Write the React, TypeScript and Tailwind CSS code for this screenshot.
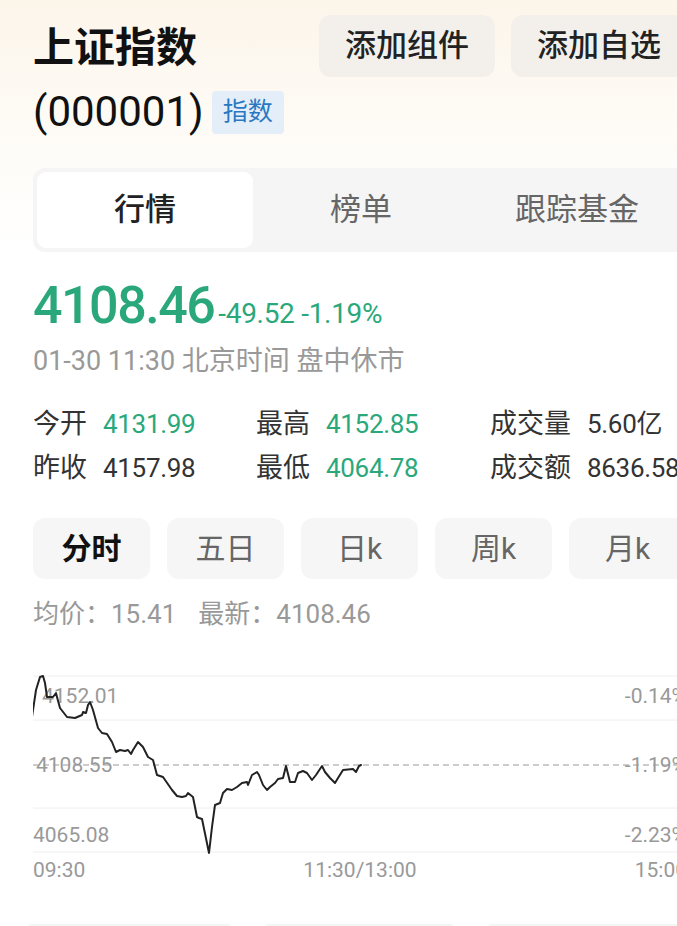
import React from "react";

const pts: [number, number][] = [
  [32, 717], [36, 690], [40, 677], [43, 676], [45, 683], [47, 697], [50, 697], [53, 697], [56, 693], [57, 697],
  [60, 708], [67, 717], [75, 718], [82, 715], [83, 712], [86, 713], [88, 705], [90, 702], [93, 710], [98, 728],
  [102, 733], [107, 734], [112, 742], [116, 752], [120, 750], [125, 751], [128, 750], [131, 754], [133, 750],
  [138, 742], [143, 747], [148, 757], [153, 760], [157, 775], [163, 777], [172, 790], [177, 796], [182, 797],
  [186, 796], [188, 793], [193, 797], [197, 817], [199, 818], [202, 819], [209, 853], [212, 827], [215, 805],
  [220, 803], [223, 793], [227, 789], [232, 790], [237, 787], [242, 783], [247, 782], [248, 785], [252, 775],
  [257, 772], [259, 775], [263, 785], [267, 790], [270, 787], [275, 783], [278, 779], [283, 778], [286, 766],
  [290, 782], [295, 782], [298, 773], [303, 771], [307, 773], [312, 780], [316, 775], [322, 766], [325, 772],
  [330, 778], [335, 783], [338, 778], [343, 770], [353, 769], [356, 772], [359, 766], [361, 765],
];

const linePath = pts.map((p, i) => `${i === 0 ? "M" : "L"}${p[0]} ${p[1]}`).join(" ");

function Stat({ label, value, green, w }: { label: string; value: string; green?: boolean; w: string }) {
  return (
    <div className={`flex items-center shrink-0 ${w}`}>
      <span className="text-[27px] text-[#333]">{label}</span>
      <span className={`ml-4 text-[26px] tracking-[-0.3px] ${green ? "text-[#2aa87b]" : "text-[#333]"}`}>{value}</span>
    </div>
  );
}

export default function App() {
  return (
    <div className="w-[677px] h-[926px] overflow-hidden bg-white font-['Roboto','Noto_Sans_CJK_SC',sans-serif]">
      {/* Header */}
      <div className="bg-gradient-to-b from-[#fcf5ea] via-[#fefbf6] to-white">
        <div className="flex pt-[15px] pl-[33px]">
          <div className="w-[286px] shrink-0 mt-[8px]">
            <div className="text-[41px] leading-[50px] font-bold text-[#111] whitespace-nowrap">上证指数</div>
            <div className="flex items-center mt-[14px] h-[50px]">
              <span className="text-[42px] leading-[50px] text-[#111]">(000001)</span>
              <span className="ml-[8px] h-[43px] px-[11px] flex items-center rounded-[4px] bg-[#e4eef9] text-[#2a78c2] text-[25px]">
                指数
              </span>
            </div>
          </div>
          <div className="flex gap-4 shrink-0">
            <div className="w-[176px] h-[62px] rounded-[12px] bg-[#f3f0ec] flex items-center justify-center text-[31px] font-medium text-[#222]">
              添加组件
            </div>
            <div className="w-[176px] h-[62px] rounded-[12px] bg-[#f3f0ec] flex items-center justify-center text-[31px] font-medium text-[#222]">
              添加自选
            </div>
          </div>
        </div>

        {/* Tabs */}
        <div className="ml-[33px] mt-[31px] w-[656px] h-[84px] p-[4px] rounded-[12px] bg-[#f5f5f5] flex">
          <div className="w-[216px] h-full rounded-[9px] bg-white flex items-center justify-center text-[31px] font-medium text-[#222]">
            行情
          </div>
          <div className="w-[216px] h-full flex items-center justify-center text-[31px] text-[#666]">榜单</div>
          <div className="w-[216px] h-full flex items-center justify-center text-[31px] text-[#666]">跟踪基金</div>
        </div>
      </div>

      {/* Price */}
      <div className="ml-[33px] mt-[24px] flex items-baseline text-[#2aa87b] h-[60px]">
        <span className="text-[52px] leading-[60px] font-medium tracking-[-1.5px]">4108.46</span>
        <span className="ml-[4px] text-[28px] tracking-[-0.3px]">-49.52 -1.19%</span>
      </div>
      <div className="ml-[33px] mt-[7px] text-[27px] leading-[36px] text-[#999] whitespace-nowrap">01-30 11:30 北京时间 盘中休市</div>

      {/* Stats */}
      <div className="ml-[33px] mt-[23px] whitespace-nowrap">
        <div className="flex h-[44px]">
          <Stat label="今开" value="4131.99" green w="w-[223px]" />
          <Stat label="最高" value="4152.85" green w="w-[234px]" />
          <Stat label="成交量" value="5.60亿" w="w-[220px]" />
        </div>
        <div className="flex h-[44px]">
          <Stat label="昨收" value="4157.98" w="w-[223px]" />
          <Stat label="最低" value="4064.78" green w="w-[234px]" />
          <Stat label="成交额" value="8636.58亿" w="w-[220px]" />
        </div>
      </div>

      {/* Periods */}
      <div className="ml-[33px] mt-[28px] flex gap-[17px]">
        {["分时", "五日", "日k", "周k", "月k"].map((t, i) => (
          <div
            key={t}
            className={`w-[117px] h-[61px] shrink-0 rounded-[12px] bg-[#f6f6f6] flex items-center justify-center text-[30px] ${
              i === 0 ? "font-bold text-[#111]" : "text-[#666]"
            }`}
          >
            {t}
          </div>
        ))}
      </div>

      <div className="ml-[33px] mt-[18px] text-[26px] leading-[34px] text-[#999] whitespace-nowrap">
        均价：15.41<span className="ml-[22px]">最新：4108.46</span>
      </div>

      {/* Chart */}
      <div className="ml-[33px] mt-[35px] w-[654px]">
        <div className="relative h-[190px]">
          <svg className="absolute inset-0" width="654" height="190" viewBox="33 666 654 190">
            <line x1="33" x2="687" y1="676" y2="676" stroke="#eeeeee" strokeWidth="1" />
            <line x1="33" x2="687" y1="720" y2="720" stroke="#eeeeee" strokeWidth="1" />
            <line x1="33" x2="687" y1="808" y2="808" stroke="#eeeeee" strokeWidth="1" />
            <line x1="33" x2="687" y1="852" y2="852" stroke="#eeeeee" strokeWidth="1" />
            <line x1="33" x2="687" y1="765" y2="765" stroke="#999999" strokeWidth="1.2" strokeDasharray="6 4" />
          </svg>
          <div className="absolute left-[9px] top-[16px] text-[21px] leading-[28px] text-[#999]">4152.01</div>
          <div className="absolute left-[3px] top-[85px] text-[21px] leading-[28px] text-[#999]">4108.55</div>
          <div className="absolute left-0 top-[155px] text-[21px] leading-[28px] text-[#999]">4065.08</div>
          <div className="absolute right-0 top-[16px] text-[21px] leading-[28px] text-[#999]">-0.14%</div>
          <div className="absolute right-0 top-[85px] text-[21px] leading-[28px] text-[#999]">-1.19%</div>
          <div className="absolute right-0 top-[155px] text-[21px] leading-[28px] text-[#999]">-2.23%</div>
          <svg className="absolute inset-0" width="654" height="190" viewBox="33 666 654 190">
            <path d={linePath} fill="none" stroke="#222" strokeWidth="2" strokeLinejoin="round" strokeLinecap="round" />
          </svg>
        </div>
        <div className="grid grid-cols-3 h-[28px] text-[21px] leading-[28px] text-[#999]">
          <span className="text-left">09:30</span>
          <span className="text-center">11:30/13:00</span>
          <span className="text-right">15:00</span>
        </div>
      </div>

      {/* Next cards peeking */}
      <div className="ml-[26px] mt-[40px] flex gap-[30px]">
        <div className="w-[207px] h-[20px] rounded-t-[6px] bg-[#f5f5f5] shrink-0" />
        <div className="w-[193px] h-[20px] rounded-t-[6px] bg-[#f5f5f5] shrink-0" />
        <div className="w-[207px] h-[20px] rounded-t-[6px] bg-[#f5f5f5] shrink-0" />
      </div>
    </div>
  );
}
